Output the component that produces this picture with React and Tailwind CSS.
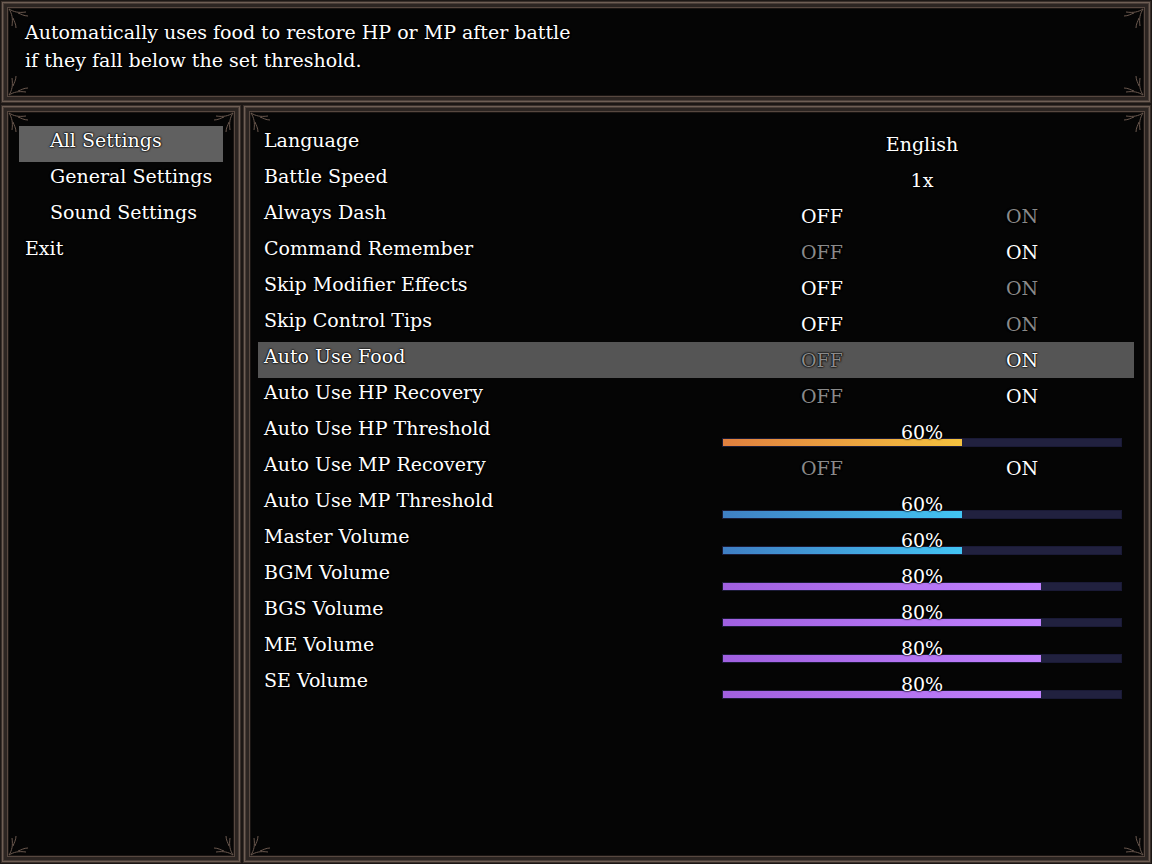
const serif = { fontFamily: '"DejaVu Serif", "Liberation Serif", serif' };

const outline = "[text-shadow:0_0_2px_#000,0_0_2px_#000,0_0_1px_#000]";

const frame =
  "relative bg-[#050505] border border-[#1c1715] shadow-[inset_0_0_0_1px_#3a302b,inset_0_0_0_2px_#6f5f55,inset_0_0_0_3px_#4a3e38,inset_0_0_0_6px_#2c2522,inset_0_0_0_7px_#574840,inset_0_0_0_8px_#1a1513]";

function Curl({ className }) {
  return (
    <svg
      className={"pointer-events-none absolute " + className}
      width="26"
      height="26"
      viewBox="0 0 26 26"
      fill="none"
      stroke="#6a584e"
      strokeWidth="1"
    >
      <path d="M1 1 C 6 4, 10 5, 18 4 M 10 5 C 13 6, 16 8, 20 8" />
      <path d="M1 1 C 4 6, 5 10, 4 18 M 5 10 C 6 13, 8 16, 8 20" />
    </svg>
  );
}

function Window({ className, children }) {
  return (
    <div className={frame + " " + className}>
      <Curl className="top-[7px] left-[7px]" />
      <Curl className="top-[7px] right-[7px] -scale-x-100" />
      <Curl className="bottom-[7px] left-[7px] -scale-y-100" />
      <Curl className="bottom-[7px] right-[7px] -scale-100" />
      {children}
    </div>
  );
}

const fills = {
  orange: "bg-gradient-to-r from-[#e0803f] to-[#f4c23f]",
  blue: "bg-gradient-to-r from-[#3f7fc4] to-[#42c4f4]",
  purple: "bg-gradient-to-r from-[#a060e0] to-[#c282ff]",
};

const options = [
  { label: "Language", kind: "text", value: "English" },
  { label: "Battle Speed", kind: "text", value: "1x" },
  { label: "Always Dash", kind: "toggle", value: false },
  { label: "Command Remember", kind: "toggle", value: true },
  { label: "Skip Modifier Effects", kind: "toggle", value: false },
  { label: "Skip Control Tips", kind: "toggle", value: false },
  { label: "Auto Use Food", kind: "toggle", value: true },
  { label: "Auto Use HP Recovery", kind: "toggle", value: true },
  { label: "Auto Use HP Threshold", kind: "gauge", value: 60, color: "orange" },
  { label: "Auto Use MP Recovery", kind: "toggle", value: true },
  { label: "Auto Use MP Threshold", kind: "gauge", value: 60, color: "blue" },
  { label: "Master Volume", kind: "gauge", value: 60, color: "blue" },
  { label: "BGM Volume", kind: "gauge", value: 80, color: "purple" },
  { label: "BGS Volume", kind: "gauge", value: 80, color: "purple" },
  { label: "ME Volume", kind: "gauge", value: 80, color: "purple" },
  { label: "SE Volume", kind: "gauge", value: 80, color: "purple" },
];

const selectedOption = 6;

function Value({ opt }) {
  if (opt.kind === "text") {
    return <div className="text-center">{opt.value}</div>;
  }
  if (opt.kind === "toggle") {
    return (
      <div className="flex">
        <div className={"flex-1 text-center " + (opt.value ? "text-[#8a8a8a]" : "text-white")}>OFF</div>
        <div className={"flex-1 text-center " + (opt.value ? "text-white" : "text-[#8a8a8a]")}>ON</div>
      </div>
    );
  }
  return (
    <div className="grid h-9">
      <div className="[grid-area:1/1] self-end mb-[3px] h-[9px] bg-[#21213f] border border-[#1a1a36]">
        <div className={"h-full " + fills[opt.color]} style={{ width: opt.value + "%" }} />
      </div>
      <div className="[grid-area:1/1] self-center text-center">{opt.value}%</div>
    </div>
  );
}

export default function App() {
  return (
    <div
      className={"w-[1152px] h-[864px] flex flex-col bg-[#050505] text-white text-[19px] overflow-hidden " + outline}
      style={serif}
    >
      <Window className="h-[104px] shrink-0 px-[24px] pt-[17px] leading-[28px]">
        <div>Automatically uses food to restore HP or MP after battle</div>
        <div>if they fall below the set threshold.</div>
      </Window>

      <div className="flex flex-1 min-h-0">
        <Window className="w-[242px] shrink-0 px-[18px] pt-[21px]">
          <div className="h-9 bg-[#606060] pl-[31px] pb-[8px] flex items-center">All Settings</div>
          <div className="h-9 pl-[31px] pb-[8px] flex items-center">General Settings</div>
          <div className="h-9 pl-[31px] pb-[8px] flex items-center">Sound Settings</div>
          <div className="h-9 pl-[6px] pb-[8px] flex items-center">Exit</div>
        </Window>

        <Window className="flex-1 pl-[15px] pr-[17px] pt-[21px]">
          {options.map((opt, i) => (
            <div
              key={opt.label}
              className={"h-9 flex items-center pl-[6px] " + (i === selectedOption ? "bg-[#555555]" : "")}
            >
              <div className="flex-1 pb-[8px]">{opt.label}</div>
              <div className="w-[400px] mr-[12px]">
                <Value opt={opt} />
              </div>
            </div>
          ))}
        </Window>
      </div>
    </div>
  );
}
